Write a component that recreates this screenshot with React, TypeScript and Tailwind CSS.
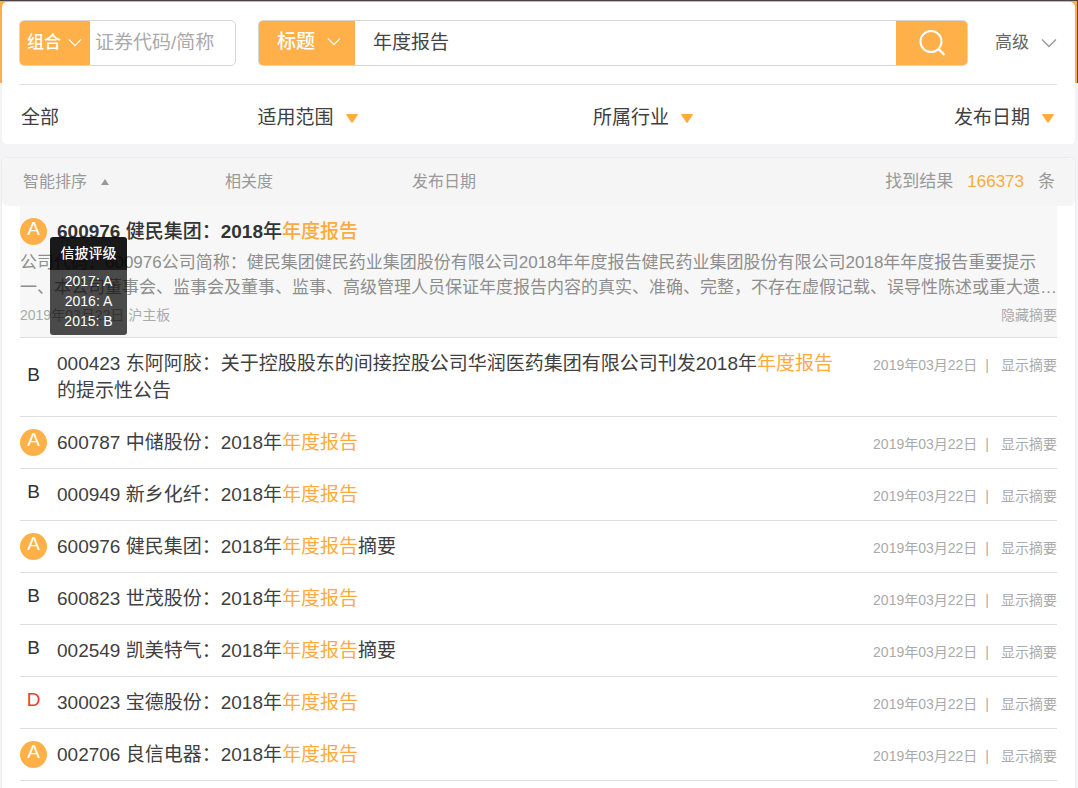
import React from "react";

type Grade = "A" | "B" | "D";

interface IAnnouncement {
  grade: Grade;
  code: string;
  name: string;
  before: string;
  keyword: string;
  after?: string;
  date: string;
}

const KEYWORD = "年度报告";

const announcements: IAnnouncement[] = [
  {
    grade: "B",
    code: "000423",
    name: "东阿阿胶",
    before: "关于控股股东的间接控股公司华润医药集团有限公司刊发2018年",
    keyword: KEYWORD,
    after: "的提示性公告",
    date: "2019年03月22日",
  },
  { grade: "A", code: "600787", name: "中储股份", before: "2018年", keyword: KEYWORD, date: "2019年03月22日" },
  { grade: "B", code: "000949", name: "新乡化纤", before: "2018年", keyword: KEYWORD, date: "2019年03月22日" },
  { grade: "A", code: "600976", name: "健民集团", before: "2018年", keyword: KEYWORD, after: "摘要", date: "2019年03月22日" },
  { grade: "B", code: "600823", name: "世茂股份", before: "2018年", keyword: KEYWORD, date: "2019年03月22日" },
  { grade: "B", code: "002549", name: "凯美特气", before: "2018年", keyword: KEYWORD, after: "摘要", date: "2019年03月22日" },
  { grade: "D", code: "300023", name: "宝德股份", before: "2018年", keyword: KEYWORD, date: "2019年03月22日" },
  { grade: "A", code: "002706", name: "良信电器", before: "2018年", keyword: KEYWORD, date: "2019年03月22日" },
];

const ratings = ["2017: A", "2016: A", "2015: B"];

const gradeStyles: Record<Grade, string> = {
  A: "rounded-full bg-[#ffb048] text-white",
  B: "text-[#333333]",
  D: "text-[#e8431f]",
};

const Chevron = ({ className }: { className: string }) => (
  <svg viewBox="0 0 16 10" fill="none" stroke="currentColor" strokeWidth="1.4" className={className}>
    <path d="M1 1.5 8 8.5 15 1.5" />
  </svg>
);

const GradeBadge = ({ grade }: { grade: Grade }) => (
  <span
    className={`flex h-[27px] w-[27px] shrink-0 items-center justify-center pb-1.5 text-[19px] leading-none ${gradeStyles[grade]}`}
  >
    {grade}
  </span>
);

const FilterButton = ({ label, className = "" }: { label: string; className?: string }) => (
  <button type="button" className={`flex items-center gap-3 ${className}`}>
    {label}
    <svg viewBox="0 0 12 9" className="h-[9px] w-3 fill-[#ffac38]">
      <path d="M0.8 0h10.4a.6.6 0 0 1 .5 1L6.6 8.5a.7.7 0 0 1-1.2 0L.3 1A.6.6 0 0 1 .8 0z" />
    </svg>
  </button>
);

const SearchBar = () => (
  <form className="flex items-center border-b border-[#e2e2e2] py-[18px]" onSubmit={(e) => e.preventDefault()}>
    <div className="flex h-[46px] w-[217px] shrink-0 overflow-hidden rounded-[5px] border border-[#d6d6d6]">
      <div className="relative -my-px -ml-px w-[71px] shrink-0 bg-[#ffb048] text-white">
        <select aria-label="组合" className="h-full w-full appearance-none pl-2 text-[17px] font-medium outline-none">
          <option>组合</option>
        </select>
        <Chevron className="pointer-events-none absolute top-[18px] right-2 h-[9px] w-[14px]" />
      </div>
      <input
        aria-label="证券代码/简称"
        placeholder="证券代码/简称"
        className="w-full min-w-0 px-[5px] text-[19px] outline-none placeholder:text-[#aaaaaa]"
      />
    </div>
    <div className="ml-[22px] flex h-[46px] min-w-0 flex-1 overflow-hidden rounded-[5px] border border-[#d6d6d6]">
      <div className="relative -mt-px -ml-px w-[97px] shrink-0 bg-[#ffb048] text-white">
        <select aria-label="标题" className="h-full w-full appearance-none pl-[19px] text-[19px] font-medium outline-none">
          <option>标题</option>
        </select>
        <Chevron className="pointer-events-none absolute top-[17px] right-[14px] h-[9px] w-[14px]" />
      </div>
      <input
        aria-label="关键字"
        defaultValue={KEYWORD}
        className="w-full min-w-0 px-[18px] text-[19px] text-[#444444] outline-none"
      />
      <button
        type="submit"
        aria-label="搜索"
        className="-my-px -mr-px flex w-[72px] shrink-0 items-center justify-center bg-[#ffb048] text-white"
      >
        <svg viewBox="0 0 28 28" fill="none" stroke="currentColor" strokeWidth="2" className="h-7 w-7">
          <circle cx="13" cy="12.5" r="10.5" />
          <path d="m20.3 19.8 6.2 6.2" strokeWidth="2.4" />
        </svg>
      </button>
    </div>
    <button type="button" className="ml-[27px] flex shrink-0 items-center gap-3 text-[17px] text-[#666666]">
      高级
      <Chevron className="h-[10px] w-4 text-[#999999]" />
    </button>
  </form>
);

const RatingTooltip = () => (
  <div
    role="tooltip"
    className="absolute top-[19px] left-[30px] z-10 w-[77px] overflow-hidden rounded-[3px] text-center text-[14px] text-white"
  >
    <p className="bg-black/90 leading-[33px] font-medium">信披评级</p>
    <ul className="bg-black/70 pt-px pb-1 leading-5">
      {ratings.map((item) => (
        <li key={item}>{item}</li>
      ))}
    </ul>
  </div>
);

const FeaturedResult = () => (
  <article className="border-b border-[#dedede] bg-[#f7f7f7] py-3">
    <div className="relative flex">
      <GradeBadge grade="A" />
      <h2 className="ml-[10px] text-[19px] leading-[27px] font-medium text-[#333333]">
        <a href="#600976">
          <b className="font-bold">600976</b> 健民集团：<b className="font-bold">2018</b>年
          <em className="text-[#ffaa3c] not-italic">{KEYWORD}</em>
        </a>
      </h2>
      <RatingTooltip />
    </div>
    <div className="mt-[5px] text-[17px] leading-[25px] text-[#8e8e8e]">
      <p className="truncate">
        公司代码：600976公司简称：健民集团健民药业集团股份有限公司2018年年度报告健民药业集团股份有限公司2018年年度报告重要提示
      </p>
      <p className="truncate">
        一、本公司董事会、监事会及董事、监事、高级管理人员保证年度报告内容的真实、准确、完整，不存在虚假记载、误导性陈述或重大遗…
      </p>
    </div>
    <div className="mt-[5px] flex justify-between text-[14px] leading-5 text-[#aaaaaa]">
      <span>2019年03月22日 沪主板</span>
      <button type="button">隐藏摘要</button>
    </div>
  </article>
);

const ResultRow = ({ data }: { data: IAnnouncement }) => (
  <li className="flex items-center border-b border-[#dedede] py-3">
    <GradeBadge grade={data.grade} />
    <h2 className="mx-[10px] flex-1 text-[19px] leading-[27px] text-[#404040]">
      <a href={`#${data.code}`}>
        {data.code} {data.name}：{data.before}
        <em className="text-[#ffaa3c] not-italic">{data.keyword}</em>
        {data.after}
      </a>
    </h2>
    <div className="ml-4 flex shrink-0 self-start pt-1 text-[14px] leading-[23px] text-[#aaaaaa]">
      <time>{data.date}</time>
      <span className="mr-3 ml-2">|</span>
      <button type="button">显示摘要</button>
    </div>
  </li>
);

const App = () => {
  return (
    <div className="flex min-h-screen flex-col border-t border-[#4a4343] bg-[linear-gradient(to_bottom,transparent_82px,#f4f4f6_82px),linear-gradient(to_right,#ffad46_calc(100%-1px),#6b4420_0)] pr-0.5 pl-px font-['Liberation_Sans','Noto_Sans_CJK_SC',sans-serif]">
      <header className="rounded-md border border-transparent bg-white bg-clip-padding pr-[18px] pl-[17px]">
        <SearchBar />
        <nav className="grid h-[59px] grid-cols-[237fr_336fr_232fr_230fr] items-center pt-2 pr-[3px] pl-0.5 text-[19px] text-[#404040]">
          <button type="button" className="justify-self-start">
            全部
          </button>
          <FilterButton label="适用范围" />
          <FilterButton label="所属行业" />
          <FilterButton label="发布日期" className="justify-self-end" />
        </nav>
      </header>

      <main className="mt-3 flex-1 rounded-t-md border border-b-0 border-[#ececef] bg-white">
        <div className="flex h-12 items-center rounded-md bg-[#f5f5f5] pr-5 pl-[21px] text-[16px] text-[#999999]">
          <button type="button" className="flex w-[202px] items-center gap-[14px]">
            智能排序
            <svg viewBox="0 0 8 6" className="h-1.5 w-2 fill-[#999999]">
              <path d="M4 0 8 6H0z" />
            </svg>
          </button>
          <button type="button" className="w-[187px] text-left">
            相关度
          </button>
          <button type="button">发布日期</button>
          <p className="ml-auto text-[17px]">
            找到结果<span className="mx-[14px] text-[#ffaa3c]">166373</span>条
          </p>
        </div>
        <div className="px-[18px]">
          <FeaturedResult />
          <ul>
            {announcements.map((item) => (
              <ResultRow key={item.code + item.name} data={item} />
            ))}
          </ul>
        </div>
      </main>
    </div>
  );
};

export default App;
